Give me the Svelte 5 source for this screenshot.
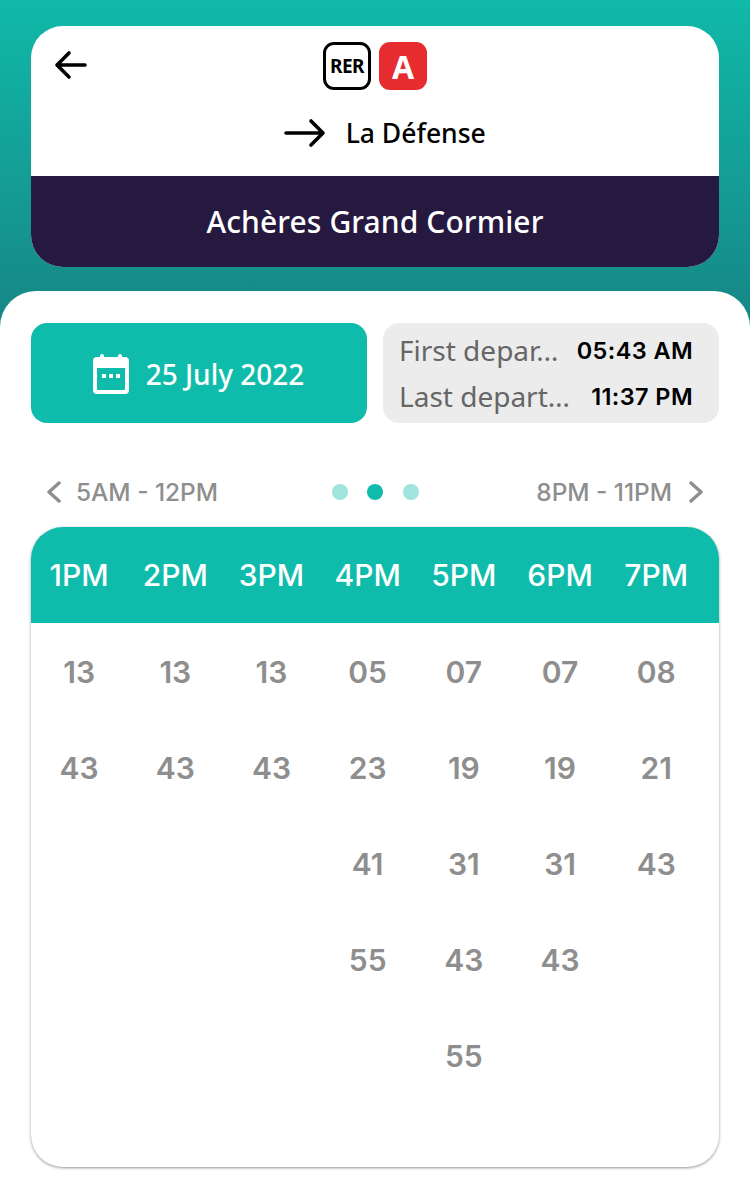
<script>
  const columns = [
    { hour: "1PM", minutes: ["13", "43"] },
    { hour: "2PM", minutes: ["13", "43"] },
    { hour: "3PM", minutes: ["13", "43"] },
    { hour: "4PM", minutes: ["05", "23", "41", "55"] },
    { hour: "5PM", minutes: ["07", "19", "31", "43", "55"] },
    { hour: "6PM", minutes: ["07", "19", "31", "43"] },
    { hour: "7PM", minutes: ["08", "21", "43"] }
  ];
</script>

<div class="screen">
  <header class="top">
    <div class="line-card">
      <div class="line-info">
        <svg class="back" width="34" height="30" viewBox="0 0 34 30" fill="none" stroke="#000" stroke-width="3.6" stroke-linecap="round" stroke-linejoin="round">
          <path d="M31 15H3M15 3 3 15l12 12" />
        </svg>
        <div class="badges">
          <span class="badge rer">RER</span>
          <span class="badge line">A</span>
        </div>
        <div class="direction">
          <svg width="42" height="30" viewBox="0 0 42 30" fill="none" stroke="#000" stroke-width="3.6" stroke-linecap="round" stroke-linejoin="round">
            <path d="M2 15h37M27 3l12 12-12 12" />
          </svg>
          <span>La Défense</span>
        </div>
      </div>
      <div class="station">Achères Grand Cormier</div>
    </div>
  </header>

  <main class="sheet">
    <div class="summary">
      <div class="date">
        <svg width="38" height="40" viewBox="0 0 38 40" fill="#fff">
          <rect x="8" y="0" width="4" height="7" rx="2" />
          <rect x="26" y="0" width="4" height="7" rx="2" />
          <path fill-rule="evenodd" d="M5 3h28a4 4 0 0 1 4 4v29a4 4 0 0 1-4 4H5a4 4 0 0 1-4-4V7a4 4 0 0 1 4-4Zm0 11v21a1 1 0 0 0 1 1h26a1 1 0 0 0 1-1V14Z" />
          <rect x="10" y="20" width="4" height="4" />
          <rect x="17" y="20" width="4" height="4" />
          <rect x="24" y="20" width="4" height="4" />
        </svg>
        <span>25 July 2022</span>
      </div>
      <div class="times">
        <div class="time-row">
          <span class="label">First depar…</span>
          <span class="value">05:43 AM</span>
        </div>
        <div class="time-row">
          <span class="label">Last depart…</span>
          <span class="value">11:37 PM</span>
        </div>
      </div>
    </div>

    <div class="pager">
      <div class="page-link">
        <svg width="16" height="22" viewBox="0 0 16 22" fill="none" stroke="#8e8e8e" stroke-width="3.4" stroke-linecap="round" stroke-linejoin="round">
          <path d="M13 2 3 11l10 9" />
        </svg>
        <span>5AM - 12PM</span>
      </div>
      <div class="dots">
        <i></i>
        <i class="active"></i>
        <i></i>
      </div>
      <div class="page-link right">
        <span>8PM - 11PM</span>
        <svg width="16" height="22" viewBox="0 0 16 22" fill="none" stroke="#8e8e8e" stroke-width="3.4" stroke-linecap="round" stroke-linejoin="round">
          <path d="m3 2 10 9-10 9" />
        </svg>
      </div>
    </div>

    <div class="timetable">
      <div class="hours">
        {#each columns as col}
          <div class="hour">{col.hour}</div>
        {/each}
      </div>
      <div class="body">
        {#each columns as col}
          <div class="col">
            {#each col.minutes as m}
              <div class="minute">{m}</div>
            {/each}
          </div>
        {/each}
      </div>
    </div>
  </main>
</div>

<style>
  :global(body) {
    background: #fff;
  }

  .screen {
    width: 750px;
    height: 1198px;
    overflow: hidden;
    background: #fff;
    font-family: "Noto Sans", sans-serif;
  }

  .top {
    height: 331px;
    padding: 26px 31px 0;
    box-sizing: border-box;
    background: linear-gradient(180deg, #10b9a9 0%, #178585 100%);
  }

  .line-card {
    height: 241px;
    border-radius: 32px;
    overflow: hidden;
    background: #fff;
    display: flex;
    flex-direction: column;
  }

  .line-info {
    position: relative;
    height: 150px;
    display: flex;
    flex-direction: column;
    align-items: center;
  }

  .back {
    position: absolute;
    left: 23px;
    top: 24px;
  }

  .badges {
    display: flex;
    gap: 8px;
    margin-top: 16px;
  }

  .badge {
    width: 48px;
    height: 48px;
    box-sizing: border-box;
    border-radius: 11px;
    display: flex;
    align-items: center;
    justify-content: center;
    font-weight: 700;
  }

  .rer {
    border: 3px solid #000;
    color: #000;
    font-size: 19px;
    letter-spacing: -0.6px;
  }

  .line {
    background: #e62c2e;
    color: #fff;
    font-size: 32px;
  }

  .direction {
    display: flex;
    align-items: center;
    gap: 20px;
    margin: 25px 0 0 19.5px;
    font-size: 26.5px;
    font-weight: 500;
    line-height: 36px;
    color: #000;
  }

  .station {
    flex: 1;
    background: #26193f;
    color: #fff;
    display: flex;
    align-items: center;
    justify-content: center;
    font-size: 30px;
    font-weight: 500;
    letter-spacing: 0.1px;
  }

  .sheet {
    position: relative;
    margin-top: -40px;
    height: 907px;
    box-sizing: border-box;
    padding: 32px 31px 0;
    background: #fff;
    border-radius: 36px 36px 0 0;
  }

  .summary {
    display: grid;
    grid-template-columns: 1fr 1fr;
    gap: 16px;
    height: 100px;
  }

  .date {
    background: #0fbcab;
    border-radius: 16px;
    color: #fff;
    display: flex;
    align-items: center;
    justify-content: center;
    gap: 16px;
    padding: 1px 2px 0 0;
    font-size: 28px;
    font-weight: 500;
  }

  .times {
    background: #ececec;
    border-radius: 16px;
    padding: 0 26px 0 16px;
    display: flex;
    flex-direction: column;
    justify-content: center;
  }

  .time-row {
    display: flex;
    align-items: center;
    justify-content: space-between;
    height: 46px;
  }

  .label {
    white-space: nowrap;
    font-size: 28px;
    color: #666;
  }

  .value {
    font-family: Inter, sans-serif;
    font-size: 23.5px;
    font-weight: 600;
    letter-spacing: 0.4px;
    color: #000;
  }

  .pager {
    height: 40px;
    box-sizing: border-box;
    margin-top: 48px;
    padding: 1px 15px 0 15px;
    display: grid;
    grid-template-columns: 1fr auto 1fr;
    align-items: center;
  }

  .page-link {
    display: flex;
    align-items: center;
    gap: 14px;
    font-family: Inter, sans-serif;
    font-size: 24.4px;
    font-weight: 500;
    color: #8e8e8e;
  }

  .page-link.right {
    justify-content: flex-end;
    gap: 16px;
  }

  .dots {
    display: flex;
    gap: 19.5px;
  }

  .dots i {
    display: block;
    width: 16px;
    height: 16px;
    border-radius: 50%;
    background: #9fe4dd;
  }

  .dots i.active {
    background: #0fbcab;
  }

  .timetable {
    margin-top: 16px;
    height: 640px;
    border-radius: 32px;
    background: #fff;
    overflow: hidden;
    box-shadow: 0 1px 3px rgba(0, 0, 0, 0.42);
  }

  .hours {
    height: 96px;
    background: #0fbcab;
    display: grid;
    grid-template-columns: repeat(7, 96.2px);
    align-items: center;
  }

  .hour {
    text-align: center;
    color: #fff;
    font-family: Inter, sans-serif;
    font-size: 30px;
    font-weight: 500;
  }

  .body {
    display: grid;
    grid-template-columns: repeat(7, 96.2px);
    padding-top: 1px;
  }

  .minute {
    height: 96px;
    display: flex;
    align-items: center;
    justify-content: center;
    font-family: Inter, sans-serif;
    font-size: 30px;
    font-weight: 600;
    color: #8e8e8e;
  }
</style>
